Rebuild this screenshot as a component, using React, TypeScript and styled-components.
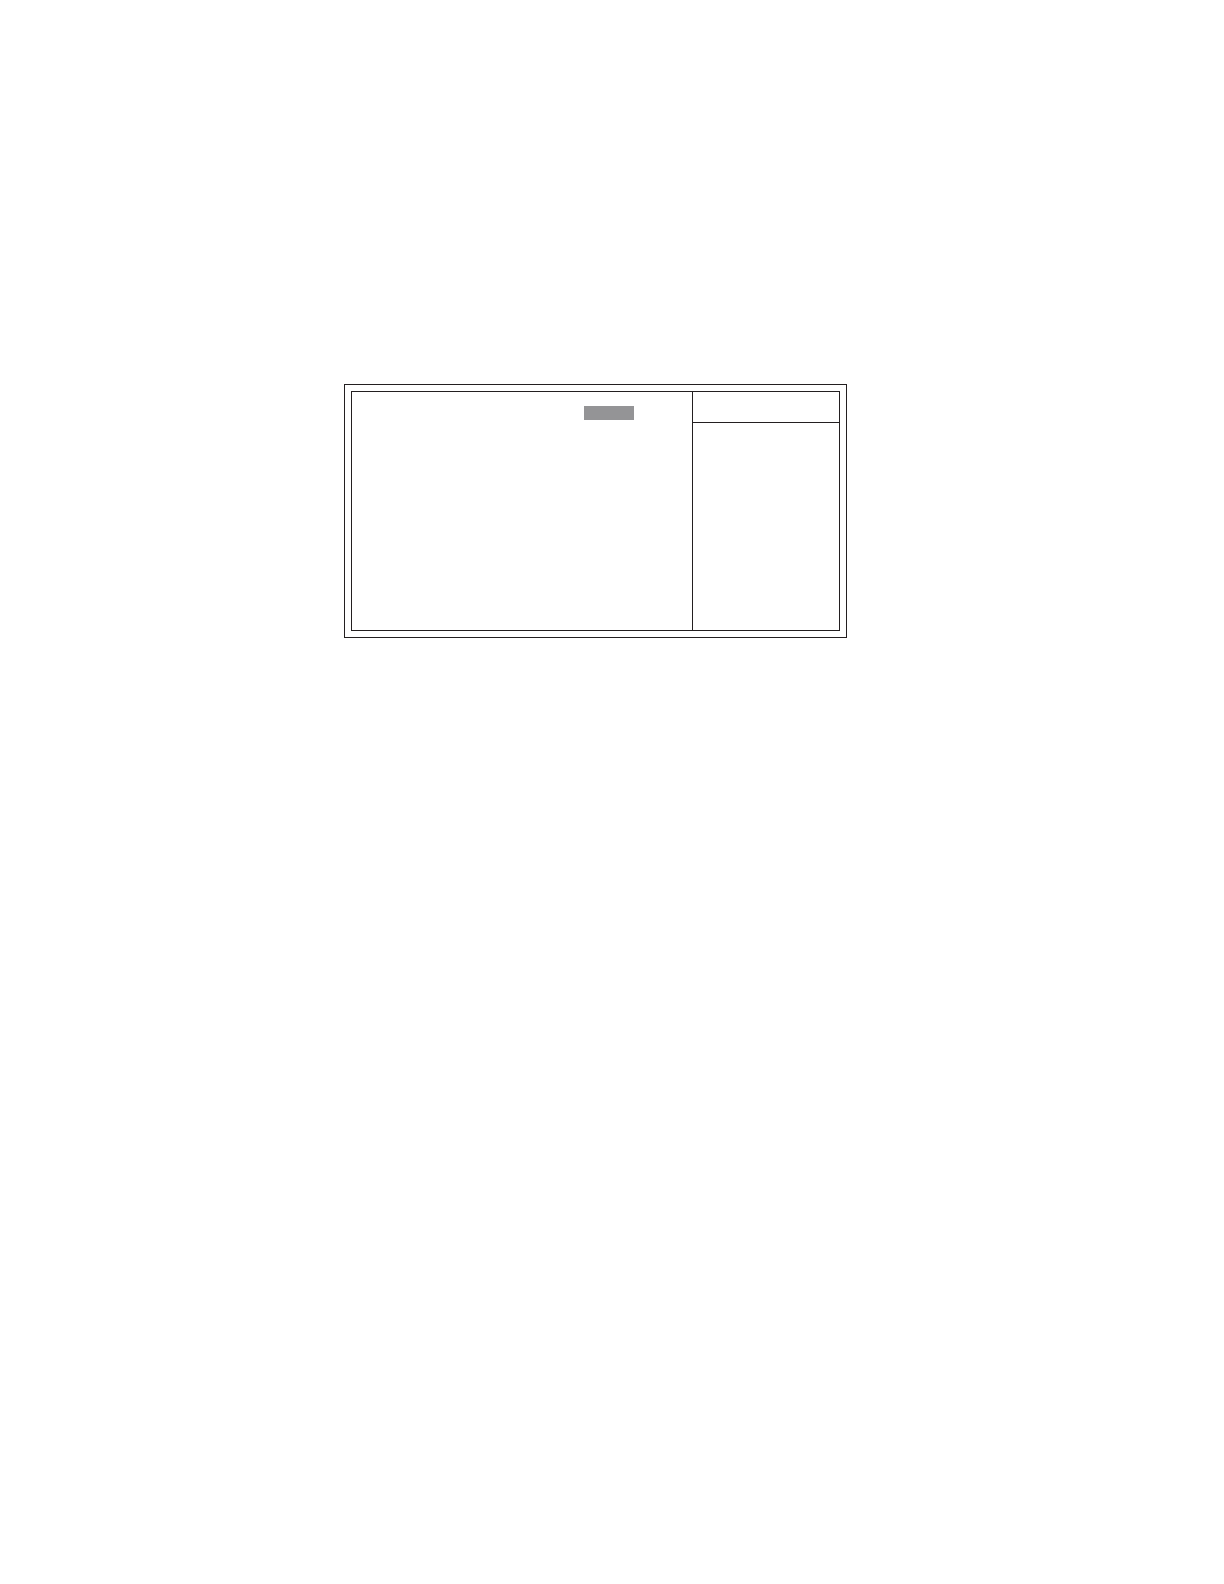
import React from "react";
import styled, { createGlobalStyle } from "styled-components";

const ink = "#231f20";

const GlobalStyle = createGlobalStyle`
  *, *::before, *::after {
    box-sizing: border-box;
  }

  body {
    margin: 0;
    background: #ffffff;
    color: ${ink};
    font-family: "Liberation Sans", Arial, sans-serif;
  }
`;

const Page = styled.main`
  min-height: 100vh;
  padding: 384px 377px 0 344px;
`;

const Frame = styled.section`
  padding: 6px;
  border: 1px solid ${ink};
`;

const Screen = styled.div`
  display: grid;
  grid-template-columns: minmax(0, 1fr) 147px;
  min-height: 240px;
  border: 1px solid ${ink};
`;

const SettingsPane = styled.div`
  padding: 14px 58px 14px 14px;
`;

const SettingRow = styled.div`
  display: flex;
  justify-content: flex-end;
`;

const SelectedValue = styled.div`
  width: 50px;
  height: 14px;
  background: #949496;
`;

const HelpPane = styled.aside`
  border-left: 1px solid ${ink};
`;

const HelpHeader = styled.header`
  height: 31px;
  border-bottom: 1px solid ${ink};
`;

export default function App() {
  return (
    <>
      <GlobalStyle />
      <Page>
        <Frame>
          <Screen>
            <SettingsPane>
              <SettingRow>
                <SelectedValue />
              </SettingRow>
            </SettingsPane>
            <HelpPane>
              <HelpHeader />
            </HelpPane>
          </Screen>
        </Frame>
      </Page>
    </>
  );
}
